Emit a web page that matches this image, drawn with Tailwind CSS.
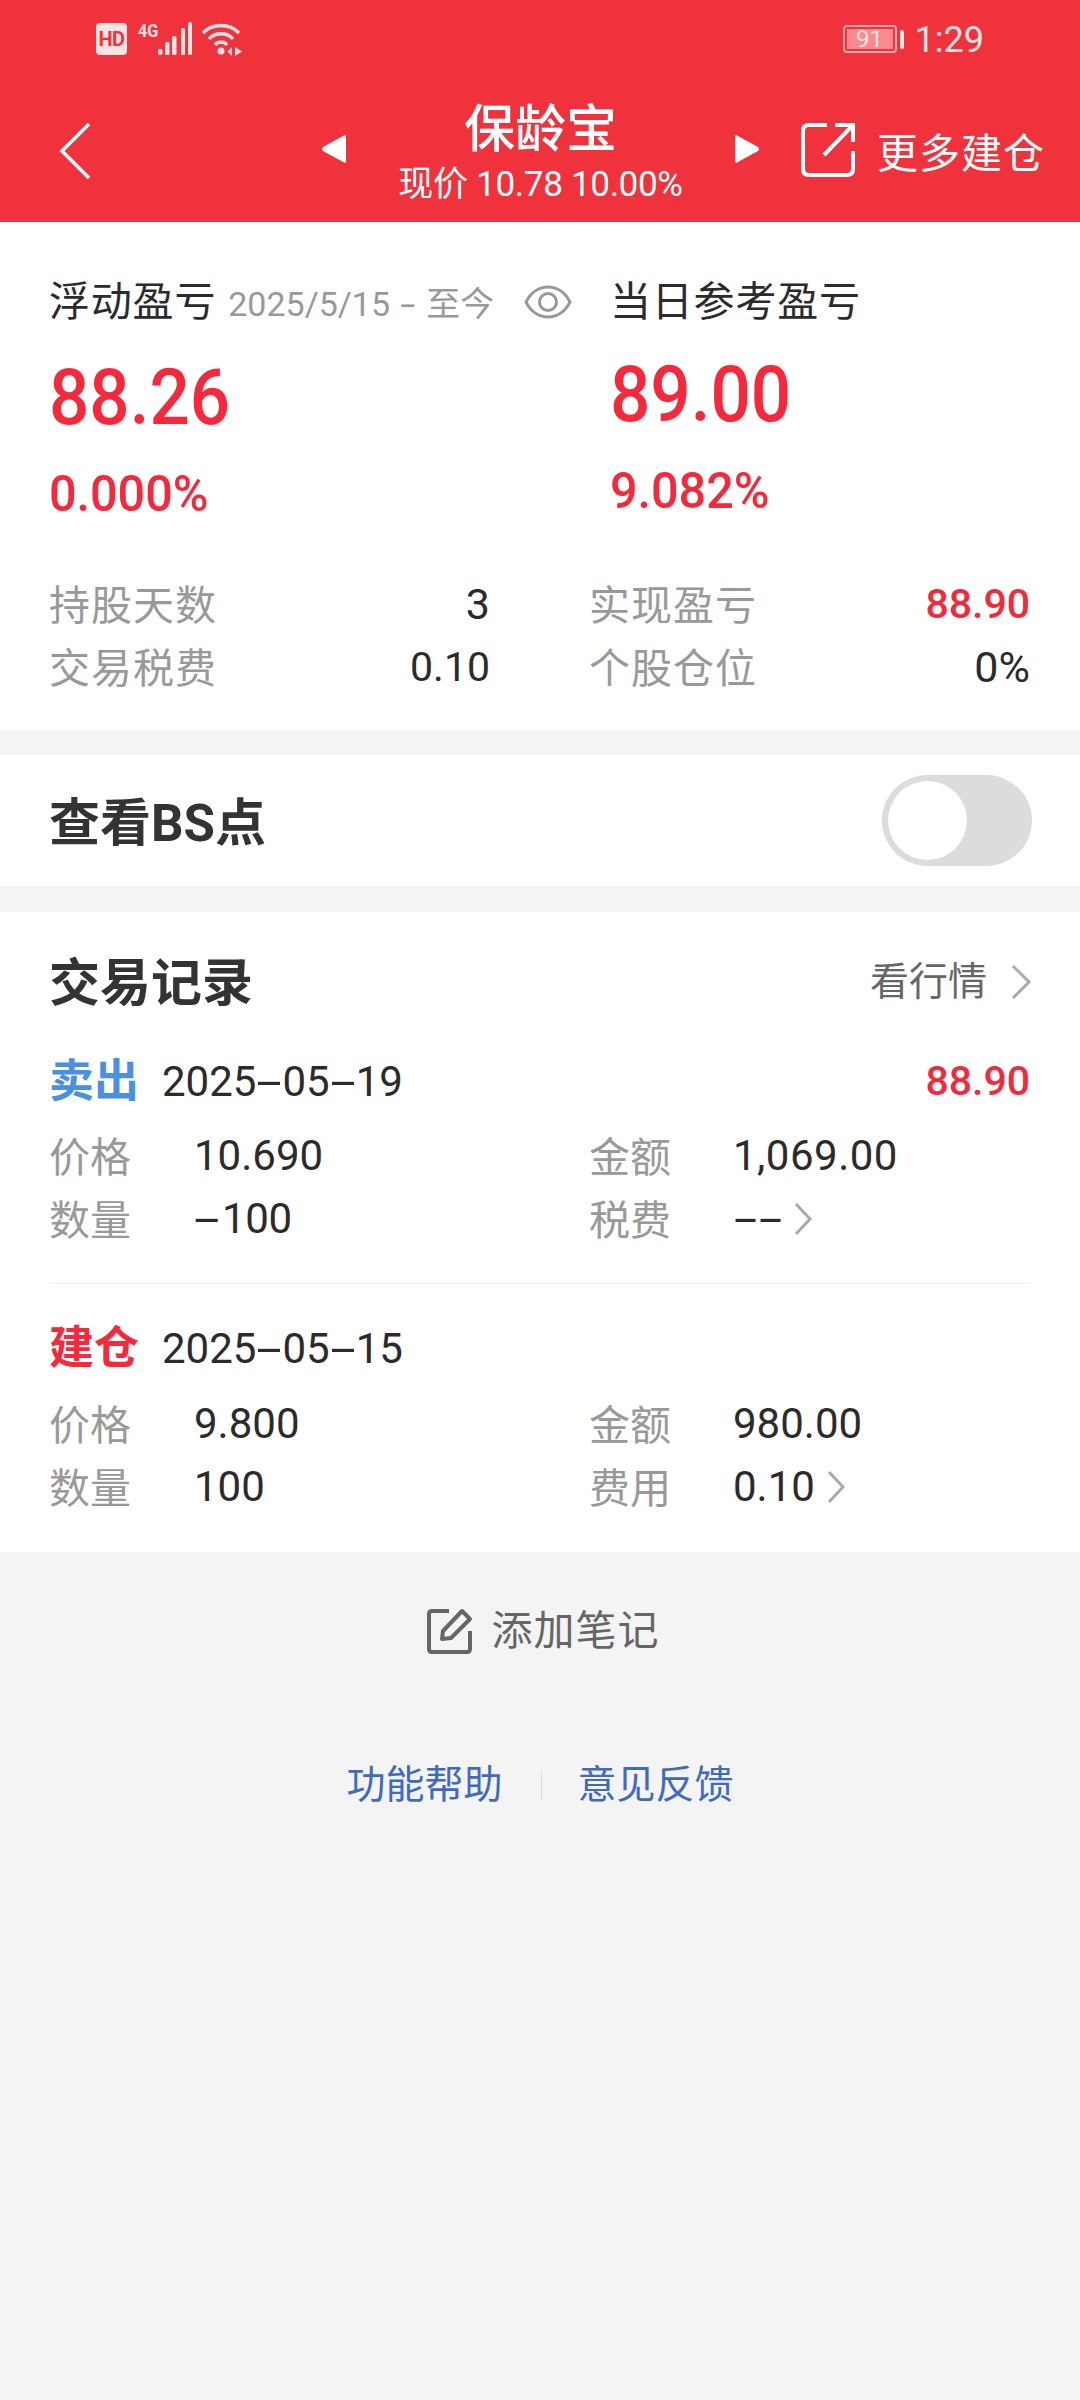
<!DOCTYPE html>
<html lang="zh-CN">
<head>
<meta charset="utf-8">
<script src="https://cdn.jsdelivr.net/npm/@tailwindcss/browser@4"></script>
</head>
<body class="m-0">
<div class="w-[1080px] h-[2400px] overflow-hidden bg-[#f4f4f5] font-['Roboto','Noto_Sans_CJK_SC',sans-serif] text-[#2b2b2b]">

  <!-- Header -->
  <header class="h-[222px] bg-[#f0323c] text-white">
    <div class="h-[78px] flex items-start">
      <div class="ml-[96px] mt-[23px] w-[31px] h-[32px] rounded-[4px] bg-[#fde3e3] text-[#f0323c] text-[20px] font-bold leading-[32px] text-center tracking-[-0.5px]">HD</div>
      <div class="relative ml-[11px] w-[54px] h-[40px] mt-[22px]">
        <span class="absolute left-0 top-[0px] inline-block origin-left scale-x-[0.85] text-[#fde3e3] text-[19px] font-bold leading-[18px]">4G</span>
        <svg width="52" height="34" viewBox="0 0 52 34" class="absolute left-[2px] top-0" fill="#fde3e3">
          <rect x="18" y="27" width="4.5" height="6" rx="2"/><rect x="25" y="20" width="4.5" height="13" rx="1.5"/><rect x="32" y="14" width="4.5" height="19" rx="1.5"/><rect x="41" y="6" width="4" height="27" rx="1.5"/><rect x="48" y="0" width="4" height="33" rx="1.5"/>
        </svg>
      </div>
      <svg width="42" height="34" viewBox="0 0 42 34" class="ml-[9px] mt-[22px]" fill="none" stroke="#fde3e3" stroke-width="3.4">
        <path d="M2 11C11 1 29 1 38 11"/><path d="M8 17C14 10 26 10 32 17"/><path d="M14 23C17 19 23 19 26 23"/>
        <circle cx="20" cy="29" r="3.5" fill="#fde3e3" stroke="none"/>
        <path d="M31 25L26.500 29.500 31 34ZM34 25L34 34 41 29.500Z" fill="#fde3e3" stroke="none"/>
      </svg>
      <div class="ml-auto mt-[25px] w-[54px] h-[28px] rounded-[4px] border-2 border-[#f9a9ad] p-[2px]">
        <div class="w-[46px] h-[20px] bg-[#f98a90] text-[#fde3e3] text-[24px] leading-[20px] text-center">91</div>
      </div>
      <div class="ml-[3px] mt-[30px] w-[4px] h-[19px] rounded-full bg-[#fde3e3]"></div>
      <div class="ml-[11px] mr-[96px] mt-[21px] text-[36px] leading-[38px] text-[#fde3e3]">1:29</div>
    </div>
    <nav class="h-[144px] flex items-start">
      <svg width="32" height="58" viewBox="0 0 32 58" class="ml-[59px] mt-[44px]" fill="none" stroke="white" stroke-width="3.6"><path d="M30 2L3 29 30 56"/></svg>
      <svg width="25" height="30" viewBox="0 0 25 30" class="ml-[230px] mt-[56px]" fill="white"><path d="M23 1.500Q25 0.500 25 3V27Q25 29.500 23 28.500L2 17Q0 15 2 13Z"/></svg>
      <div class="w-[389px] text-center">
        <div class="mt-[25px] h-[50px] text-[51px] leading-[54px] font-medium">保龄宝</div>
        <div class="mt-[12px] h-[40px] text-[35px] leading-[40px] text-[#fff] tracking-[-0.3px]">现价 10.78 10.00%</div>
      </div>
      <svg width="25" height="30" viewBox="0 0 25 30" class="mt-[56px]" fill="white"><path d="M2 1.500Q0 0.500 0 3V27Q0 29.500 2 28.500L23 17Q25 15 23 13Z"/></svg>
      <svg width="54" height="56" viewBox="0 0 54 56" class="ml-[41px] mt-[44px]" fill="none" stroke="white" stroke-width="4">
        <path d="M26 3H8Q2 3 2 9V47Q2 53 8 53H46Q52 53 52 47V29"/><path d="M23 33L51 4"/><path d="M34 3H52V20"/>
      </svg>
      <div class="ml-[22px] mt-[51px] text-[41px] leading-[50px] tracking-[1px] whitespace-nowrap">更多建仓</div>
    </nav>
  </header>

  <!-- Summary -->
  <section class="h-[508px] bg-white pt-[54px]">
    <div class="grid grid-cols-[561px_1fr] pl-[49px]">
      <div>
        <div class="h-[52px] flex items-center">
          <span class="text-[41px] leading-[52px] tracking-[0.800px] whitespace-nowrap">浮动盈亏</span>
          <span class="ml-[12px] mt-[4px] w-[266px] flex justify-between text-[34px] leading-[40px] text-[#999] whitespace-nowrap"><span>2025/5/15</span><span class="inline-block scale-x-[1.6]">-</span><span>至今</span></span>
          <svg width="48" height="36" viewBox="0 0 48 36" class="ml-[30px]" fill="none" stroke="#999" stroke-width="3"><path d="M2 18C12 -2 36 -2 46 18 36 38 12 38 2 18Z"/><circle cx="24" cy="18" r="8.500"/></svg>
        </div>
        <div class="mt-[25px] h-[90px] text-[78px] leading-[90px] font-medium text-[#f5283c]"><span class="inline-block origin-left scale-x-[0.91]">88.26</span></div>
        <div class="mt-[21px] h-[60px] text-[50px] leading-[60px] font-medium text-[#f5283c]"><span class="inline-block origin-left scale-x-[0.97]">0.000%</span></div>
      </div>
      <div>
        <div class="h-[52px] text-[41px] leading-[52px] tracking-[0.800px] whitespace-nowrap">当日参考盈亏</div>
        <div class="mt-[22px] h-[90px] text-[78px] leading-[90px] font-medium text-[#f5283c]"><span class="inline-block origin-left scale-x-[0.91]">89.00</span></div>
        <div class="mt-[21px] h-[60px] text-[50px] leading-[60px] font-medium text-[#f5283c]"><span class="inline-block origin-left scale-x-[0.97]">9.082%</span></div>
      </div>
    </div>
    <div class="mt-[49px] grid grid-cols-[441px_441px] auto-rows-[63px] gap-x-[99px] pl-[49px] text-[41px] leading-[62px]">
      <div class="flex justify-between"><span class="pt-[2px] text-[#999] tracking-[1px]">持股天数</span><span class="text-[43px]">3</span></div>
      <div class="flex justify-between"><span class="pt-[2px] text-[#999] tracking-[1px]">实现盈亏</span><span class="text-[41px] font-medium text-[#f5283c]">88.90</span></div>
      <div class="flex justify-between"><span class="pt-[2px] text-[#999] tracking-[1px]">交易税费</span><span class="text-[41px]">0.10</span></div>
      <div class="flex justify-between"><span class="pt-[2px] text-[#999] tracking-[1px]">个股仓位</span><span class="text-[43px]">0%</span></div>
    </div>
  </section>

  <!-- Toggle -->
  <section class="mt-[25px] h-[131px] bg-white flex items-center justify-between pl-[49px] pr-[48px]">
    <span class="pt-[7px] text-[51px] font-bold text-[#333]">查看BS点</span>
    <div class="w-[150px] h-[91px] rounded-full bg-[#dcdcdc] p-[6px]"><div class="w-[79px] h-[79px] rounded-full bg-white"></div></div>
  </section>

  <!-- Records -->
  <section class="mt-[26px] h-[640px] bg-white pl-[49px] pr-[50px] pt-[36px]">
    <div class="h-[68px] flex items-center justify-between">
      <span class="pt-[5px] text-[51px] font-bold text-[#333]">交易记录</span>
      <span class="flex items-center text-[39px] text-[#666]">看行情
        <svg width="24" height="36" viewBox="0 0 24 36" class="ml-[22px] -mr-[3px]" fill="none" stroke="#aaa" stroke-width="3"><path d="M4 2L20 18 4 34"/></svg>
      </span>
    </div>

    <div class="mt-[32px] h-[68px] flex items-center justify-between">
      <span class="flex items-center">
        <span class="text-[45px] font-bold text-[#4a90e2]">卖出</span>
        <span class="ml-[23px] -mt-[2px] text-[42px]">2025<span class="inline-block w-[26px] text-center scale-x-[2.2]">-</span>05<span class="inline-block w-[26px] text-center scale-x-[2.2]">-</span>19</span>
      </span>
      <span class="text-[41px] font-medium text-[#f5283c]">88.90</span>
    </div>
    <div class="mt-[8px] grid grid-cols-[441px_441px] auto-rows-[63px] gap-x-[99px] text-[42px] leading-[63px]">
      <div class="flex"><span class="w-[145px] pt-[3px] text-[41px] text-[#999]">价格</span><span>10.690</span></div>
      <div class="flex"><span class="w-[144px] pt-[3px] text-[41px] text-[#999]">金额</span><span class="tracking-[0.500px]">1,069.00</span></div>
      <div class="flex"><span class="w-[145px] pt-[3px] text-[41px] text-[#999]">数量</span><span class="tracking-[-0.3px]"><span class="inline-block w-[28px] text-left origin-left scale-x-[2.2]">-</span>100</span></div>
      <div class="flex"><span class="w-[144px] pt-[3px] text-[41px] text-[#999]">税费</span><span class="flex items-center"><span class="inline-block w-[25px] text-center scale-x-[2]">-</span><span class="inline-block w-[25px] text-center scale-x-[2]">-</span>
        <svg width="20" height="34" viewBox="0 0 20 34" class="ml-[10px]" fill="none" stroke="#aaa" stroke-width="3"><path d="M3 2L17 17 3 32"/></svg></span></div>
    </div>

    <div class="mt-[33px] h-px bg-[#eee] ml-[1px]"></div>

    <div class="mt-[31px] h-[68px] flex items-center">
      <span class="text-[45px] font-bold text-[#f5283c]">建仓</span>
      <span class="ml-[23px] -mt-[2px] text-[42px]">2025<span class="inline-block w-[26px] text-center scale-x-[2.2]">-</span>05<span class="inline-block w-[26px] text-center scale-x-[2.2]">-</span>15</span>
    </div>
    <div class="mt-[9px] grid grid-cols-[441px_441px] auto-rows-[63px] gap-x-[99px] text-[42px] leading-[63px]">
      <div class="flex"><span class="w-[145px] pt-[3px] text-[41px] text-[#999]">价格</span><span>9.800</span></div>
      <div class="flex"><span class="w-[144px] pt-[3px] text-[41px] text-[#999]">金额</span><span>980.00</span></div>
      <div class="flex"><span class="w-[145px] pt-[3px] text-[41px] text-[#999]">数量</span><span>100</span></div>
      <div class="flex"><span class="w-[144px] pt-[3px] text-[41px] text-[#999]">费用</span><span class="flex items-center">0.10
        <svg width="20" height="34" viewBox="0 0 20 34" class="ml-[11px]" fill="none" stroke="#aaa" stroke-width="3"><path d="M3 2L17 17 3 32"/></svg></span></div>
    </div>
  </section>

  <!-- Notes -->
  <div class="mt-[53px] h-[52px] flex items-center justify-center pl-[6px]">
    <svg width="46" height="46" viewBox="0 0 46 46" fill="none" stroke="#666" stroke-width="4" stroke-linejoin="round">
      <path d="M22 3H5Q2 3 2 6V41Q2 44 5 44H40Q43 44 43 41V23"/><path d="M15 31L16 23 35 3 43 11 24 30Z"/>
    </svg>
    <span class="ml-[19px] text-[41px] leading-[52px] tracking-[1px] text-[#666]">添加笔记</span>
  </div>

  <!-- Links -->
  <div class="mt-[103px] h-[50px] flex items-center justify-center text-[39px] text-[#4069c0]">
    <span>功能帮助</span>
    <span class="ml-[38px] mr-[36px] w-px h-[30px] bg-[#ddd]"></span>
    <span>意见反馈</span>
  </div>
</div>
</body>
</html>
